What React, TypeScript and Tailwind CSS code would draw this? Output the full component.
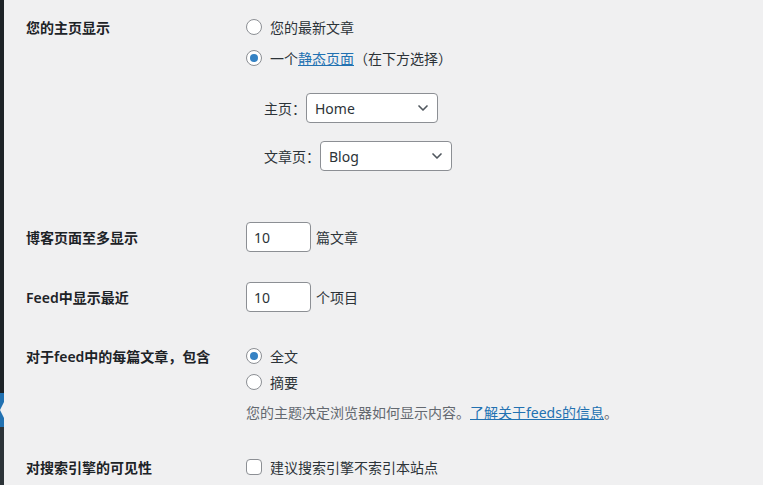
import { ChevronDown } from 'lucide-react';

const font = { fontFamily: '"Noto Sans", "Noto Sans CJK SC", sans-serif' };

// full-width punctuation box, so that it keeps its em width
function P({ c, align = 'left' }: { c: string; align?: 'left' | 'right' | 'center' }) {
  const a = align === 'right' ? 'text-right' : align === 'center' ? 'text-center' : 'text-left';
  return <span className={`inline-block w-[14px] ${a}`}>{c}</span>;
}

function Radio({ checked, children }: { checked?: boolean; children: React.ReactNode }) {
  return (
    <div className="flex items-center h-[22px] text-[14px] text-[#2c3338]">
      <span className="w-4 h-4 rounded-full border border-[#8c8f94] bg-white flex items-center justify-center shrink-0">
        {checked && <span className="w-2 h-2 rounded-full bg-[#3582c4]" />}
      </span>
      <span className="ml-2">{children}</span>
    </div>
  );
}

function Select({ value }: { value: string }) {
  return (
    <div className="w-[132px] h-[30px] border border-[#8c8f94] rounded-[4px] bg-white flex items-center justify-between pl-[8px] pr-[6px] text-[14px] text-[#2c3338]">
      <span>{value}</span>
      <ChevronDown className="w-4 h-4 text-[#50575e]" strokeWidth={2.5} />
    </div>
  );
}

function NumberInput({ value, unit }: { value: string; unit: string }) {
  return (
    <div className="flex items-center h-[30px] text-[14px] text-[#2c3338]">
      <div className="w-[65px] h-[30px] border border-[#8c8f94] rounded-[4px] bg-white flex items-center pl-[7px]">
        {value}
      </div>
      <span className="ml-[5px]">{unit}</span>
    </div>
  );
}

function Label({ children, h }: { children: React.ReactNode; h: string }) {
  return (
    <div className={`${h} flex items-center text-[14px] font-semibold text-[#1d2327]`}>
      <span>{children}</span>
    </div>
  );
}

export default function App() {
  return (
    <div className="min-h-screen h-[485px] bg-[#f0f0f1] flex overflow-hidden" style={font}>
      <aside className="w-[4px] flex flex-col shrink-0">
        <div className="h-[393px] bg-[#1d2327]" />
        <div className="h-[34px] bg-[#2271b1] flex items-center">
          <div className="w-[4px] h-[16px] bg-[#f0f0f1] [clip-path:polygon(0_50%,100%_0,100%_100%)]" />
        </div>
        <div className="flex-1 bg-[#2c3338]" />
      </aside>

      <main className="pl-[22px] flex-1">
        <div className="grid grid-cols-[220px_1fr] pt-[16px]">
          <Label h="h-[22px]">您的主页显示</Label>
          <div>
            <Radio>您的最新文章</Radio>
            <div className="mt-[9px]">
              <Radio checked>
                一个<span className="text-[#2271b1] underline">静态页面</span>
                <P c="（" align="right" />在下方选择<P c="）" />
              </Radio>
            </div>
            <div className="mt-[24px] pl-[18px] text-[14px] text-[#2c3338]">
              <div className="flex items-center">
                <span>
                  主页<P c="：" align="center" />
                </span>
                <Select value="Home" />
              </div>
              <div className="flex items-center mt-[18px]">
                <span>
                  文章页<P c="：" align="center" />
                </span>
                <Select value="Blog" />
              </div>
            </div>
          </div>
        </div>

        <div className="grid grid-cols-[220px_1fr] mt-[51px]">
          <Label h="h-[30px]">博客页面至多显示</Label>
          <NumberInput value="10" unit="篇文章" />
        </div>

        <div className="grid grid-cols-[220px_1fr] mt-[30px]">
          <Label h="h-[30px]">Feed中显示最近</Label>
          <NumberInput value="10" unit="个项目" />
        </div>

        <div className="grid grid-cols-[220px_1fr] mt-[33px]">
          <Label h="h-[22px]">
            对于feed中的每篇文章<P c="，" />包含
          </Label>
          <div>
            <Radio checked>全文</Radio>
            <div className="mt-[4px]">
              <Radio>摘要</Radio>
            </div>
            <p className="mt-[8px] h-[22px] flex items-center text-[14px] text-[#646970]">
              <span>
                您的主题决定浏览器如何显示内容<P c="。" />
                <span className="text-[#2271b1] underline">了解关于feeds的信息</span>
                <P c="。" />
              </span>
            </p>
          </div>
        </div>

        <div className="grid grid-cols-[220px_1fr] mt-[33px]">
          <Label h="h-[22px]">对搜索引擎的可见性</Label>
          <div className="flex items-center h-[22px] text-[14px] text-[#2c3338]">
            <span className="w-4 h-4 rounded-[4px] border border-[#8c8f94] bg-white shrink-0" />
            <span className="ml-2">建议搜索引擎不索引本站点</span>
          </div>
        </div>
      </main>
    </div>
  );
}
